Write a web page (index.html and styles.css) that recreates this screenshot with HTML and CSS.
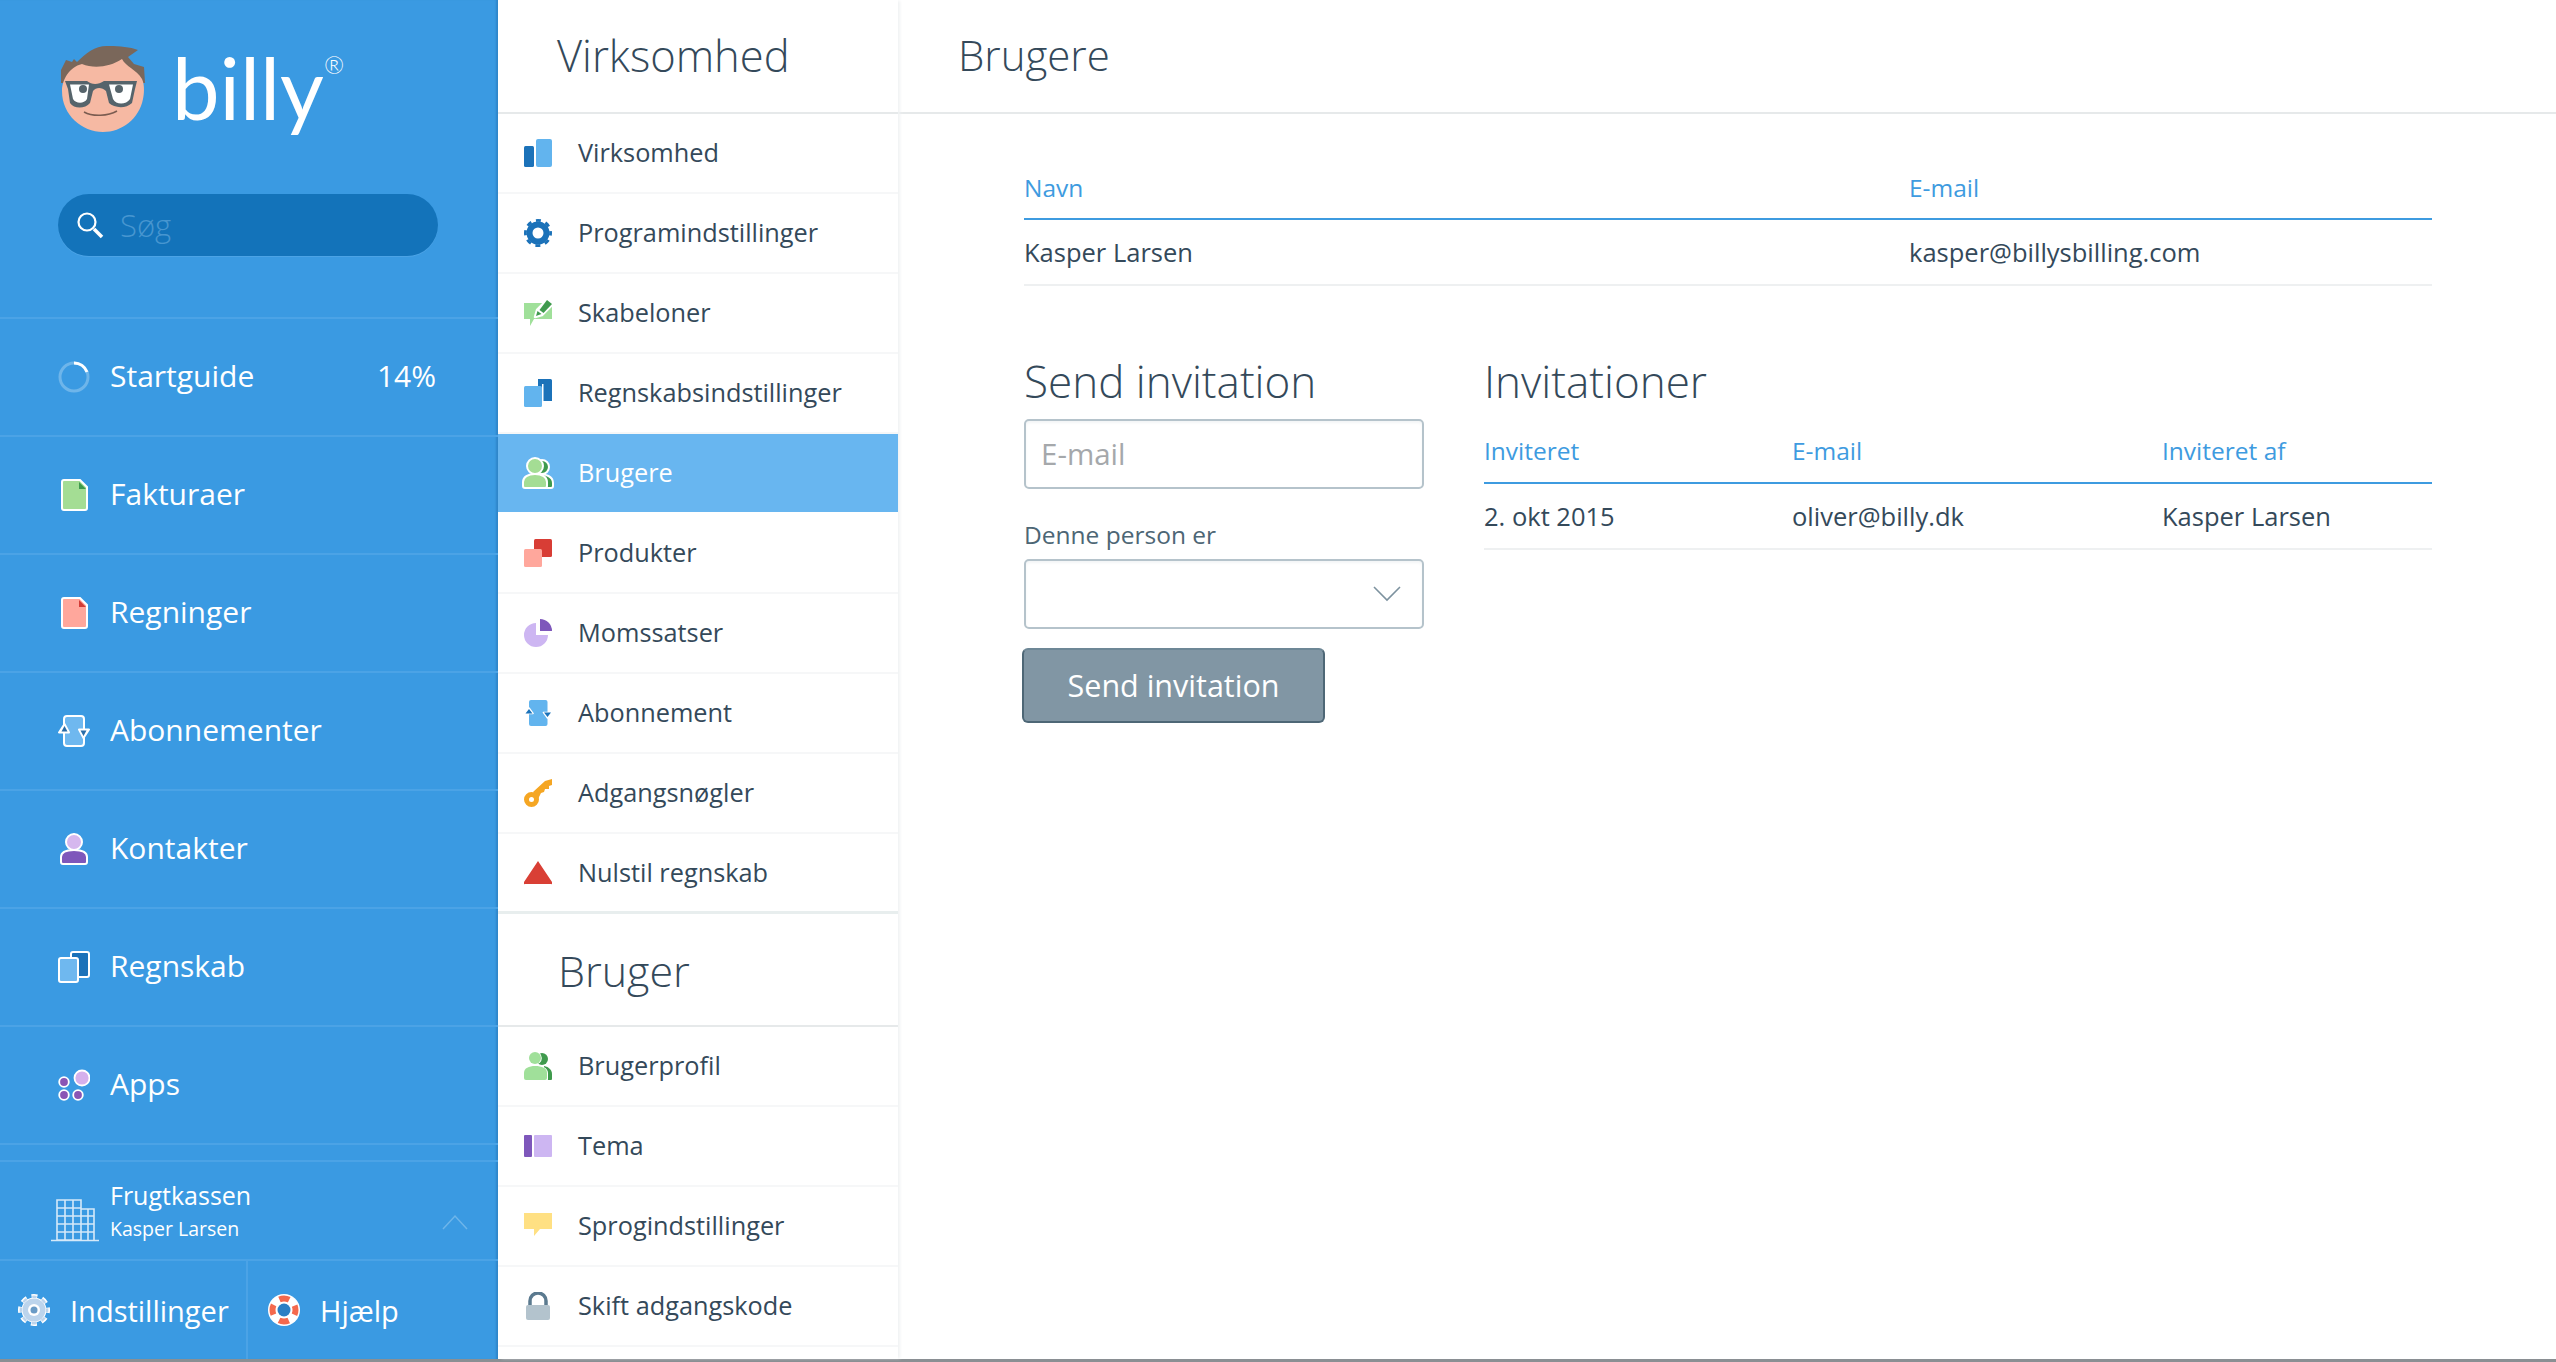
FILE: index.html
```html
<!DOCTYPE html>
<html lang="da">
<head>
<meta charset="utf-8">
<title>Billy - Brugere</title>
<link rel="stylesheet" href="styles.css">
</head>
<body>
<div class="app">
  <aside class="sidebar">
    <div class="brand">
      <svg class="face" viewBox="0 0 86 88" width="86" height="88">
        <path d="M1 25 L6 15 L12 17 L14 14 L17 17 C26 8 36 0 49 1 C60 1 70 2 78 5 L68 12 L74 19 L84 22 L85 38 L1 38Z" fill="#7a675a"/>
        <path d="M2 46 C2 35 9 22 22 19 C34 24 50 22 62 14 C66 22 76 24 82 34 C85 40 84 50 83 54 C79 74 62 87 43 87 C22 87 2 70 2 46Z" fill="#f6b9a3"/>
        <path d="M5 36 H27 C32 40 38 40 44 36 H77 L75 44 L72 58 C66 64 54 63 49 58 L46 46 C42 42 36 42 33 46 L30 58 C25 64 14 64 10 58 L8 44Z" fill="#56646b"/>
        <path d="M10 39.500 H29 L27 54 C24 59 16 59 13 54Z M49 39.500 H73 L70 54 C66 60 56 60 53 54Z" fill="#fff"/>
        <circle cx="23" cy="44" r="4" fill="#56646b"/><circle cx="59" cy="44" r="4" fill="#56646b"/>
        <path d="M24 67 C33 72 48 71 57 66" fill="none" stroke="#7b5c50" stroke-width="1.600"/>
      </svg>
      <div class="wordmark">billy<span class="reg">®</span></div>
    </div>
    <div class="search">
      <svg viewBox="0 0 30 30" width="30" height="30"><circle cx="12" cy="12" r="8.500" fill="none" stroke="#fff" stroke-width="2.200"/><path d="M19 19 L27 27" stroke="#fff" stroke-width="3.600"/></svg>
      <span class="search-text">Søg</span>
    </div>
    <nav class="nav">
      <a class="nav-item">
        <svg class="nav-icon" viewBox="0 0 32 32"><circle cx="16" cy="16" r="14" fill="none" stroke="#6eb5ea" stroke-width="3"/><path d="M16 2 A14 14 0 0 1 29 11" fill="none" stroke="#fff" stroke-width="3"/></svg>
        <span class="nav-label">Startguide</span><span class="nav-value">14%</span>
      </a>
      <a class="nav-item">
        <svg class="nav-icon" viewBox="0 0 32 32"><path d="M6 1 H22 L29 8 V29 A2 2 0 0 1 27 31 H6 A2 2 0 0 1 4 29 V3 A2 2 0 0 1 6 1Z" fill="#a4dd94" stroke="#fff" stroke-width="2"/><path d="M21 3 L28 10 H21Z" fill="#3f9a4d"/></svg>
        <span class="nav-label">Fakturaer</span>
      </a>
      <a class="nav-item">
        <svg class="nav-icon" viewBox="0 0 32 32"><path d="M6 1 H22 L29 8 V29 A2 2 0 0 1 27 31 H6 A2 2 0 0 1 4 29 V3 A2 2 0 0 1 6 1Z" fill="#ffa79c" stroke="#fff" stroke-width="2"/><path d="M21 3 L28 10 H21Z" fill="#d33c36"/></svg>
        <span class="nav-label">Regninger</span>
      </a>
      <a class="nav-item">
        <svg class="nav-icon" viewBox="0 0 32 32"><rect x="6" y="1" width="20" height="30" rx="3" fill="#6fb8ef" stroke="#fff" stroke-width="2"/><path d="M6.500 9 L1 17.500 H11Z M25.500 23 L31 14.500 H21Z" fill="#fff" stroke="#fff" stroke-width="2" stroke-linejoin="round"/><path d="M6.500 11 L3.500 16.500 H9.500Z M25.500 21 L28.500 15.500 H22.500Z" fill="#2a6da8"/></svg>
        <span class="nav-label">Abonnementer</span>
      </a>
      <a class="nav-item">
        <svg class="nav-icon" viewBox="0 0 32 32"><circle cx="16" cy="9" r="8" fill="#d5b7ee" stroke="#fff" stroke-width="2"/><path d="M3 29 V24 C3 19 8 17 16 17 C24 17 29 19 29 24 V29 A2 2 0 0 1 27 31 H5 A2 2 0 0 1 3 29Z" fill="#7e57bb" stroke="#fff" stroke-width="2"/></svg>
        <span class="nav-label">Kontakter</span>
      </a>
      <a class="nav-item">
        <svg class="nav-icon" viewBox="0 0 32 32"><rect x="13" y="1" width="18" height="25" rx="2" fill="#1b72b9" stroke="#fff" stroke-width="2"/><rect x="1" y="7" width="19" height="24" rx="2" fill="#6fb8ef" stroke="#fff" stroke-width="2"/></svg>
        <span class="nav-label">Regnskab</span>
      </a>
      <a class="nav-item">
        <svg class="nav-icon" viewBox="0 0 32 32"><circle cx="24" cy="9" r="7.500" fill="#d5b0ec" stroke="#fff" stroke-width="1.800"/><circle cx="6" cy="13" r="4.800" fill="#8a55b5" stroke="#fff" stroke-width="1.800"/><circle cx="6" cy="26" r="4.800" fill="#8a55b5" stroke="#fff" stroke-width="1.800"/><circle cx="20" cy="26" r="4.800" fill="#8a55b5" stroke="#fff" stroke-width="1.800"/></svg>
        <span class="nav-label">Apps</span>
      </a>
    </nav>
    <div class="account">
      <svg class="building" viewBox="0 0 50 44" width="50" height="44">
        <path d="M1 42.500 H49 M7 2 H31 V42 H7Z M7 10 H31 M7 18 H44 M7 26 H44 M7 34 H44 M15 2 V42 M23 2 V42 M31 11 H44 V42 M38 11 V42" fill="none" stroke="#d5e9f9" stroke-width="1.600"/>
      </svg>
      <div class="account-text">
        <div class="account-name">Frugtkassen</div>
        <div class="account-user">Kasper Larsen</div>
      </div>
      <svg class="caret" viewBox="0 0 26 16" width="26" height="16"><path d="M1 15 L13 2 L25 15" fill="none" stroke="#6eb5ea" stroke-width="1.500"/></svg>
    </div>
    <div class="bottom-bar">
      <a class="bottom-item settings">
        <svg viewBox="0 0 32 32" width="32" height="32"><circle cx="16" cy="16" r="14" fill="none" stroke="#fff" stroke-width="4" stroke-dasharray="6 5" stroke-dashoffset="3"/><circle cx="16" cy="16" r="12.500" fill="#fff"/><circle cx="16" cy="16" r="11.500" fill="#bcd4ec"/><circle cx="16" cy="16" r="13.200" fill="none" stroke="#bcd4ec" stroke-width="2.400" stroke-dasharray="4.500 5.870" stroke-dashoffset="2.250"/><circle cx="16" cy="16" r="6" fill="#fff"/><circle cx="16" cy="16" r="3.500" fill="#6a9bc6"/></svg>
        <span>Indstillinger</span>
      </a>
      <a class="bottom-item help">
        <svg viewBox="0 0 32 32" width="32" height="32"><circle cx="16" cy="16" r="16" fill="#fff"/><circle cx="16" cy="16" r="11.500" fill="none" stroke="#f4694d" stroke-width="6" stroke-dasharray="10 8.060" stroke-dashoffset="5"/><circle cx="16" cy="16" r="8" fill="#fff"/><circle cx="16" cy="16" r="6.500" fill="#2b7fc4"/></svg>
        <span>Hjælp</span>
      </a>
    </div>
  </aside>

  <section class="settings-menu">
    <h2 class="menu-title">Virksomhed</h2>
    <ul class="menu-list">
      <li class="menu-item">
        <svg class="menu-icon" viewBox="0 0 28 28"><rect x="0" y="7" width="10" height="21" rx="1.500" fill="#1b72b9"/><rect x="12" y="0" width="16" height="28" rx="2" fill="#62b4ee"/></svg>
        <span>Virksomhed</span>
      </li>
      <li class="menu-item">
        <svg class="menu-icon" viewBox="0 0 28 28"><circle cx="14" cy="14" r="12.600" fill="none" stroke="#1b72b9" stroke-width="2.800" stroke-dasharray="5 4.900" stroke-dashoffset="2.500"/><circle cx="14" cy="14" r="8.500" fill="none" stroke="#1b72b9" stroke-width="6"/></svg>
        <span>Programindstillinger</span>
      </li>
      <li class="menu-item">
        <svg class="menu-icon" viewBox="0 0 28 28"><path d="M0 4 H28 V20 H10 L6 27 V20 H0Z" fill="#a0e09a"/><path d="M11 18 L13 11 L23 1 L28 5 V6 L18 16Z" fill="#fff" stroke="#fff" stroke-width="2.500" stroke-linejoin="round"/><path d="M15.500 11 L23 1 L28 5 L19.500 14Z" fill="#3f9a4d"/><path d="M12 17 L13.500 12 L17.500 15Z" fill="#3f9a4d"/></svg>
        <span>Skabeloner</span>
      </li>
      <li class="menu-item">
        <svg class="menu-icon" viewBox="0 0 28 28"><path d="M14 0 H26.500 A1.500 1.500 0 0 1 28 1.500 V22 H14Z" fill="#1b72b9"/><rect x="0" y="7" width="18" height="21" rx="1.500" fill="#62b4ee"/><rect x="18" y="5" width="1.500" height="18" fill="#fff"/></svg>
        <span>Regnskabsindstillinger</span>
      </li>
      <li class="menu-item active">
        <svg class="menu-icon wide" viewBox="0 0 32 32"><circle cx="20" cy="10" r="7" fill="#3f9a4d" stroke="#fff" stroke-width="2"/><path d="M16 31 V18 C24 16 31 20 31 26 V29 A2 2 0 0 1 29 31Z" fill="#3f9a4d" stroke="#fff" stroke-width="2"/><circle cx="13" cy="9" r="8" fill="#a4dd94" stroke="#fff" stroke-width="2"/><path d="M1 29 V25 C1 20 6 17 13 17 C20 17 25 20 25 25 V29 A2 2 0 0 1 23 31 H3 A2 2 0 0 1 1 29Z" fill="#a4dd94" stroke="#fff" stroke-width="2"/></svg>
        <span>Brugere</span>
      </li>
      <li class="menu-item">
        <svg class="menu-icon" viewBox="0 0 28 28"><rect x="10" y="0" width="18" height="18" rx="1.500" fill="#d83d35"/><rect x="0" y="10" width="18" height="18" rx="1.500" fill="#ffa79c"/></svg>
        <span>Produkter</span>
      </li>
      <li class="menu-item">
        <svg class="menu-icon" viewBox="0 0 28 28"><path d="M12 4 V16 H24 A12 12 0 1 1 12 4Z" fill="#cdb6f2"/><path d="M16 0 A12 12 0 0 1 28 12 H16Z" fill="#7e57bb"/></svg>
        <span>Momssatser</span>
      </li>
      <li class="menu-item">
        <svg class="menu-icon" viewBox="0 0 28 28"><rect x="5" y="1" width="18.500" height="26" rx="2" fill="#62b4ee"/><path d="M5 9 L1 14.500 H9Z M23.500 19 L19.500 13.500 H27.500Z" fill="#fff" stroke="#fff" stroke-width="1.600" stroke-linejoin="round"/><path d="M5 10 L1.500 14.500 H8.500Z M23.500 18 L20 13.500 H27Z" fill="#1b72b9"/></svg>
        <span>Abonnement</span>
      </li>
      <li class="menu-item">
        <svg class="menu-icon" viewBox="0 0 28 28"><path d="M9 13 L21 2 L28 0 V6 L25 7 V10 L21 10 L20 13 L17 14 L14 20Z" fill="#f5a623"/><circle cx="7.500" cy="20.500" r="5" fill="none" stroke="#f5a623" stroke-width="5"/></svg>
        <span>Adgangsnøgler</span>
      </li>
      <li class="menu-item last">
        <svg class="menu-icon" viewBox="0 0 28 28"><path d="M14 2 L28 23 A1 1 0 0 1 27 25 H1 A1 1 0 0 1 0 23Z" fill="#d93f35"/></svg>
        <span>Nulstil regnskab</span>
      </li>
    </ul>
    <h2 class="menu-title second">Bruger</h2>
    <ul class="menu-list">
      <li class="menu-item">
        <svg class="menu-icon" viewBox="0 0 28 28"><circle cx="18" cy="7" r="6" fill="#3f9a4d"/><path d="M20 14 C25 15 28 18 28 22 V27 A1 1 0 0 1 27 28 H20Z" fill="#3f9a4d"/><circle cx="11" cy="6" r="6.800" fill="#fff"/><circle cx="11" cy="6" r="6" fill="#a0e09a"/><path d="M-1 26 V21 C-1 16 5 13 11 13 C18 13 24 16 24 21 V27 A2 2 0 0 1 22 29 H1 Z" fill="#fff"/><path d="M0 26 V21 C0 16 5 14 11 14 C18 14 23 16 23 21 V26 A2 2 0 0 1 21 28 H2 A2 2 0 0 1 0 26Z" fill="#a0e09a"/></svg>
        <span>Brugerprofil</span>
      </li>
      <li class="menu-item">
        <svg class="menu-icon" viewBox="0 0 28 22"><rect x="0" y="0" width="8" height="22" rx="1" fill="#7e57bb"/><rect x="10" y="0" width="18" height="22" rx="1" fill="#cdb6f2"/></svg>
        <span>Tema</span>
      </li>
      <li class="menu-item">
        <svg class="menu-icon" viewBox="0 0 28 28"><path d="M0 1 H28 V17 H16 L10 24 V17 H0Z" fill="#ffe083"/></svg>
        <span>Sprogindstillinger</span>
      </li>
      <li class="menu-item">
        <svg class="menu-icon" viewBox="0 0 28 28"><path d="M6 14 V9 A8 8 0 0 1 22 9 V14" fill="none" stroke="#5b7a8f" stroke-width="3.500"/><rect x="2" y="13" width="24" height="15" rx="2" fill="#b3c3cd"/></svg>
        <span>Skift adgangskode</span>
      </li>
    </ul>
  </section>

  <main class="main">
    <h1 class="page-title">Brugere</h1>
    <div class="content">
      <table class="table users">
        <thead><tr><th class="col-name">Navn</th><th>E-mail</th></tr></thead>
        <tbody><tr><td>Kasper Larsen</td><td>kasper@billysbilling.com</td></tr></tbody>
      </table>
      <div class="columns">
        <form class="invite">
          <h3 class="section-title">Send invitation</h3>
          <div class="field email-field">E-mail</div>
          <label class="field-label">Denne person er</label>
          <div class="field select-field">
            <svg viewBox="0 0 30 18" width="30" height="18"><path d="M2 2 L15 15 L28 2" fill="none" stroke="#7d929f" stroke-width="1.600"/></svg>
          </div>
          <button class="send" type="button">Send invitation</button>
        </form>
        <div class="invitations">
          <h3 class="section-title">Invitationer</h3>
          <table class="table invites">
            <thead><tr><th class="col-date">Inviteret</th><th class="col-mail">E-mail</th><th>Inviteret af</th></tr></thead>
            <tbody><tr><td>2. okt 2015</td><td>oliver@billy.dk</td><td>Kasper Larsen</td></tr></tbody>
          </table>
        </div>
      </div>
    </div>
  </main>
</div>
</body>
</html>
```
FILE: styles.css
```css
* { box-sizing: border-box; }
html, body { margin: 0; height: 100%; }
body {
  font-family: "Open Sans", "Liberation Sans", sans-serif;
  color: #34495a;
  background: #fff;
  overflow: hidden;
}
.app {
  display: flex;
  height: 1362px;
  border-bottom: 3px solid #8a8f93;
}

/* sidebar */
.sidebar {
  width: 498px;
  flex: none;
  background: #3a9ae2;
  color: #fff;
  display: flex;
  flex-direction: column;
  box-shadow: inset -3px 0 2px -1px #2f86c9;
}
.brand {
  height: 194px;
  padding: 45px 0 0 60px;
  display: flex;
  align-items: flex-start;
  gap: 26px;
}
.wordmark {
  font-family: "Lato", sans-serif;
  font-weight: 400;
  font-size: 85px;
  line-height: 100px;
  margin-top: -8px;
}
.reg {
  font-size: 24px;
  font-weight: 300;
  line-height: 1;
  vertical-align: top;
  display: inline-block;
  margin-top: 16px;
}
.search {
  margin: 0 60px 0 58px;
  height: 62px;
  border-radius: 31px;
  background: #1373ba;
  box-shadow: 0 1px 0 #4ba3e6;
  display: flex;
  align-items: center;
  padding-left: 17px;
  gap: 15px;
}
.search-text {
  font-size: 31px;
  font-weight: 300;
  color: #4796d0;
}
.nav {
  margin-top: 61px;
  border-top: 2px solid #4ba3e6;
}
.nav-item {
  height: 118px;
  display: flex;
  align-items: center;
  padding: 0 62px 0 58px;
  border-bottom: 2px solid #4ba3e6;
  gap: 20px;
  font-size: 30px;
}
.nav-icon { width: 32px; height: 32px; flex: none; }
.nav-label { flex: 1; margin-bottom: 3px; }
.nav-value { margin-bottom: 3px; }
.account {
  margin-top: 15px;
  border-top: 2px solid #4ba3e6;
  border-bottom: 2px solid #4ba3e6;
  height: 101px;
  display: flex;
  align-items: center;
  padding: 4px 30px 0 50px;
}
.building { flex: none; margin-right: 10px; margin-top: 14px; }
.account-text { flex: 1; }
.account-name { font-size: 25px; line-height: 32px; }
.account-user { font-size: 19.500px; line-height: 36px; }
.caret { flex: none; margin-top: 18px; }
.bottom-bar {
  flex: 1;
  display: flex;
}
.bottom-item {
  display: flex;
  align-items: center;
  font-size: 29px;
}
.bottom-item svg { flex: none; }
.settings {
  width: 248px;
  padding-left: 18px;
  gap: 20px;
  border-right: 2px solid #4ba3e6;
}
.help { padding-left: 20px; gap: 20px; }

/* settings column */
.settings-menu {
  width: 400px;
  flex: none;
  background: #fff;
  box-shadow: 3px 0 3px -1px #f0f2f3;
  z-index: 1;
}
.menu-title {
  margin: 0;
  height: 114px;
  line-height: 111px;
  padding-left: 59px;
  font-size: 43.500px;
  font-weight: 300;
  border-bottom: 2px solid #e6e9ea;
}
.menu-title.second {
  height: 113px;
  line-height: 113px;
  padding-left: 60px;
  font-size: 43px;
}
.menu-list { list-style: none; margin: 0; padding: 0; }
.menu-item {
  height: 80px;
  display: flex;
  align-items: center;
  padding-left: 26px;
  gap: 26px;
  font-size: 25.300px;
  border-bottom: 2px solid #f6f7f8;
}
.menu-item span { margin-bottom: 2px; }
.menu-item.last { border-bottom: 3px solid #e8eeee; }
.menu-item.active {
  background: #68b6f0;
  background-clip: padding-box;
  color: #fff;
  border-bottom-color: #fff;
}
.menu-icon { width: 28px; height: 28px; flex: none; }
.menu-icon.wide { width: 32px; height: 32px; margin: 0 -2px; }

/* main */
.main { flex: 1; min-width: 0; }
.page-title {
  margin: 0;
  height: 114px;
  line-height: 110px;
  padding-left: 60px;
  font-size: 42px;
  font-weight: 300;
  border-bottom: 2px solid #e6e9ea;
}
.content { padding: 50px 124px 0 126px; }
.table {
  width: 100%;
  border-collapse: separate;
  border-spacing: 0;
  table-layout: fixed;
  font-size: 25.500px;
}
.table th {
  text-align: left;
  font-size: 24.500px;
  font-weight: 400;
  color: #3e9be0;
  height: 56px;
  padding: 0 0 8px;
  border-bottom: 2px solid #3e9be0;
}
.table td {
  height: 66px;
  padding: 0;
  border-bottom: 2px solid #eef0f1;
}
.col-name { width: 885px; }
.col-date { width: 308px; }
.col-mail { width: 370px; }
.columns {
  display: flex;
  gap: 60px;
  margin-top: 64px;
}
.invite { width: 400px; flex: none; }
.invitations { flex: 1; min-width: 0; }
.section-title {
  margin: 0 0 5px;
  height: 64px;
  line-height: 62px;
  font-size: 44px;
  font-weight: 300;
}
.invitations .table th { height: 65px; padding-bottom: 0; }
.field {
  height: 70px;
  border: 2px solid #b5c3cb;
  border-radius: 5px;
  background: #fff;
  box-shadow: inset 0 2px 3px #f3f5f6;
}
.email-field {
  padding-left: 15px;
  line-height: 66px;
  font-size: 29.500px;
  color: #a5a8ab;
}
.field-label {
  display: block;
  margin-top: 28px;
  height: 42px;
  line-height: 36px;
  font-size: 24.500px;
  color: #4d6675;
}
.select-field {
  display: flex;
  align-items: center;
  justify-content: flex-end;
  padding-right: 20px;
}
.send {
  display: block;
  margin: 19px 0 0 -2px;
  width: 303px;
  height: 75px;
  border: 2px solid #4e6776;
  border-top-color: #6d8796;
  border-radius: 6px;
  background: #8196a4;
  color: #fff;
  font: 400 30.500px "Open Sans", sans-serif;
  padding: 0 0 2px;
}
```
